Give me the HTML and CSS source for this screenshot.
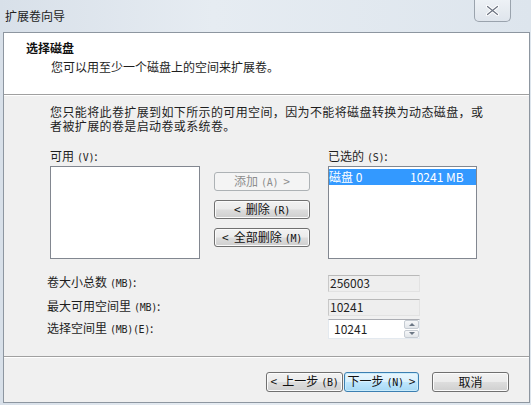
FILE: index.html
```html
<!DOCTYPE html>
<html lang="zh-CN">
<head>
  <meta charset="UTF-8" />
  <title>扩展卷向导</title>
  <link rel="stylesheet" href="styles.css">
</head>
<body>

  <div class="window">
    <div class="title-bar">
      <span class="title-text">扩展卷向导</span>
      <div class="close-btn">
        <svg width="13" height="11" viewBox="0 0 13 11">
          <path d="M1.5 1.5 L11.5 9.5 M11.5 1.5 L1.5 9.5" stroke="#fff" stroke-width="3.2" stroke-linecap="round"/>
          <path d="M1.5 1.5 L11.5 9.5 M11.5 1.5 L1.5 9.5" stroke="#6b7280" stroke-width="1.2" stroke-linecap="round"/>
        </svg>
      </div>
    </div>

    <div class="client">
      <div class="header">
        <div class="header-title">选择磁盘</div>
        <div class="header-sub">您可以用至少一个磁盘上的空间来扩展卷。</div>
      </div>

      <div class="content">
        <p class="intro">您只能将此卷扩展到如下所示的可用空间，因为不能将磁盘转换为动态磁盘，或<br>者被扩展的卷是启动卷或系统卷。</p>

        <div class="picker">
          <div class="picker-col">
            <div class="list-label">可用<span class="key">(V)</span>:</div>
            <div class="listbox"></div>
          </div>
          <div class="move-buttons">
            <div class="btn disabled"><span>添加<span class="key">(A)</span><span class="chev">&gt;</span></span></div>
            <div class="btn"><span><span class="chev left">&lt;</span>删除<span class="key">(R)</span></span></div>
            <div class="btn"><span><span class="chev left">&lt;</span>全部删除<span class="key">(M)</span></span></div>
          </div>
          <div class="picker-col">
            <div class="list-label">已选的<span class="key">(S)</span>:</div>
            <div class="listbox">
              <div class="list-item selected">
                <span class="item-name">磁盘 0</span>
                <span class="item-size">10241 MB</span>
              </div>
            </div>
          </div>
        </div>

        <div class="sizes">
          <div class="size-row row-total">
            <span class="size-label">卷大小总数<span class="key">(MB)</span>:</span>
            <div class="field readonly">256003</div>
          </div>
          <div class="size-row row-max">
            <span class="size-label">最大可用空间里<span class="key">(MB)</span>:</span>
            <div class="field readonly">10241</div>
          </div>
          <div class="size-row row-select">
            <span class="size-label">选择空间里<span class="key">(MB)(E)</span>:</span>
            <div class="field spin">
              <span class="spin-value">10241</span>
              <div class="spinner">
                <div class="spin-btn"><span class="arrow up"></span></div>
                <div class="spin-btn"><span class="arrow down"></span></div>
              </div>
            </div>
          </div>
        </div>
      </div>

      <div class="footer">
        <div class="btn nav"><span><span class="chev left">&lt;</span>上一步<span class="key">(B)</span></span></div>
        <div class="btn nav default"><span>下一步<span class="key">(N)</span><span class="chev">&gt;</span></span></div>
        <div class="btn nav cancel"><span>取消</span></div>
      </div>
    </div>
  </div>

</body>
</html>
```

FILE: styles.css
```css
body {
  margin: 0;
  font-family: "Noto Sans CJK SC", "DejaVu Sans", sans-serif;
  font-size: 12px;
  color: #1e1e1e;
  background: #dfe6ed;
}

.window {
  width: 531px;
  height: 405px;
  box-sizing: border-box;
  padding: 0 1px 2px 3px;
  background: linear-gradient(to right, #d8e0e9, #e6ecf2 40%, #dde5ed);
  display: flex;
  flex-direction: column;
}

.title-bar {
  height: 32px;
  display: flex;
  align-items: center;
  justify-content: space-between;
  padding-left: 2px;
  padding-bottom: 1px;
  box-sizing: border-box;
}

.title-text {
  font-size: 12px;
  line-height: 14px;
  color: #222;
}

.close-btn {
  align-self: flex-start;
  width: 37px;
  height: 23px;
  margin-right: 19px;
  margin-top: -1px;
  box-sizing: border-box;
  border: 1px solid #9aa3ad;
  border-top: none;
  border-radius: 0 0 5px 5px;
  background: linear-gradient(#eef2f6, #dfe5ec);
  display: flex;
  align-items: center;
  justify-content: center;
}

.client {
  flex: 1;
  display: flex;
  flex-direction: column;
  border: 1px solid #8d96a0;
  background: #f0f0f0;
}

.header {
  height: 62px;
  box-sizing: border-box;
  background: #fff;
  padding: 7px 0 0 22px;
  border-bottom: 1px solid #a0a0a0;
}

.header-title {
  font-weight: bold;
  line-height: 16px;
  color: #111;
}

.header-sub {
  margin-top: 3px;
  padding-left: 25px;
  line-height: 16px;
}

.content {
  height: 261px;
  box-sizing: border-box;
  border-top: 1px solid #fff;
  padding: 9px 0 0 46px;
}

.intro {
  margin: 0;
  line-height: 14px;
  letter-spacing: 0.38px;
}

.key {
  font-family: "DejaVu Sans Mono", monospace;
  font-size: 10px;
  letter-spacing: -0.3px;
  margin-left: 3px;
}

.chev {
  margin-left: 5px;
}

.chev.left {
  margin-left: 0;
  margin-right: 5px;
}

.picker {
  display: flex;
  margin-top: 15px;
}

.picker-col {
  display: flex;
  flex-direction: column;
}

.list-label {
  line-height: 16px;
}

.listbox {
  width: 150px;
  height: 93px;
  box-sizing: border-box;
  border: 1px solid #828790;
  background: #fff;
  padding-top: 2px;
}

.picker-col:last-child .listbox {
  width: 149px;
}

.list-item {
  display: flex;
  height: 16px;
  line-height: 16px;
}

.list-item.selected {
  background: #3399ff;
  color: #fff;
}

.item-name {
  width: 81px;
}

.move-buttons {
  width: 96px;
  margin: 24px 18px 0 14px;
  display: flex;
  flex-direction: column;
  gap: 9px;
}

.btn {
  height: 19px;
  box-sizing: border-box;
  border: 1px solid #707070;
  border-radius: 3px;
  background: linear-gradient(#f2f2f2 0%, #ebebeb 48%, #dddddd 52%, #cfcfcf 100%);
  box-shadow: inset 0 0 0 1px #fbfbfb;
  display: flex;
  align-items: center;
  justify-content: center;
  line-height: 14px;
  color: #111;
}

.btn.disabled {
  border-color: #adb2b5;
  background: #f4f4f4;
  box-shadow: none;
  color: #8d8d8d;
}

.sizes {
  margin: 15px 0 0 -3px;
  display: flex;
  flex-direction: column;
}

.size-row {
  display: flex;
  align-items: center;
}

.row-max {
  margin-top: 6px;
}

.row-select {
  margin-top: 3px;
}

.size-label {
  width: 281px;
  line-height: 16px;
}

.field {
  width: 92px;
  height: 17px;
  box-sizing: border-box;
  line-height: 14px;
  display: flex;
  align-items: center;
  padding-left: 1px;
}

.field.readonly {
  background: #eeeeee;
  border: 1px solid #e2e2e2;
  border-top-color: #b9b9b9;
  border-left-color: #c8c8c8;
}

.field.spin {
  height: 20px;
  background: #fff;
  border: 1px solid #e3e9ef;
  border-top-color: #abadb3;
  padding-left: 5px;
  justify-content: space-between;
}

.spinner {
  width: 15px;
  height: 18px;
  display: flex;
  flex-direction: column;
  gap: 1px;
}

.spin-btn {
  flex: 1;
  box-sizing: border-box;
  border: 1px solid #c6ccd3;
  border-radius: 2px;
  background: linear-gradient(#f6f7f9, #e2e6ea);
  display: flex;
  align-items: center;
  justify-content: center;
}

.arrow {
  width: 0;
  height: 0;
  border-left: 3px solid transparent;
  border-right: 3px solid transparent;
}

.arrow.up {
  border-bottom: 3px solid #6b7785;
}

.arrow.down {
  border-top: 3px solid #6b7785;
}

.footer {
  flex: 1;
  border-top: 1px solid #a0a0a0;
  box-shadow: inset 0 1px 0 #fff;
  display: flex;
  justify-content: flex-end;
  align-items: flex-start;
  padding: 15px 20px 0 0;
}

.btn.nav {
  width: 77px;
  height: 20px;
}

.btn.default {
  width: 75px;
  margin-left: 1px;
  border-color: #3c7fb1;
  background: linear-gradient(#eaf6fd 0%, #d9f0fc 48%, #bee6fd 52%, #a7d9f5 100%);
  box-shadow: inset 0 0 0 1px #c9ecfc;
}

.btn.cancel {
  margin-left: 13px;
}
```
